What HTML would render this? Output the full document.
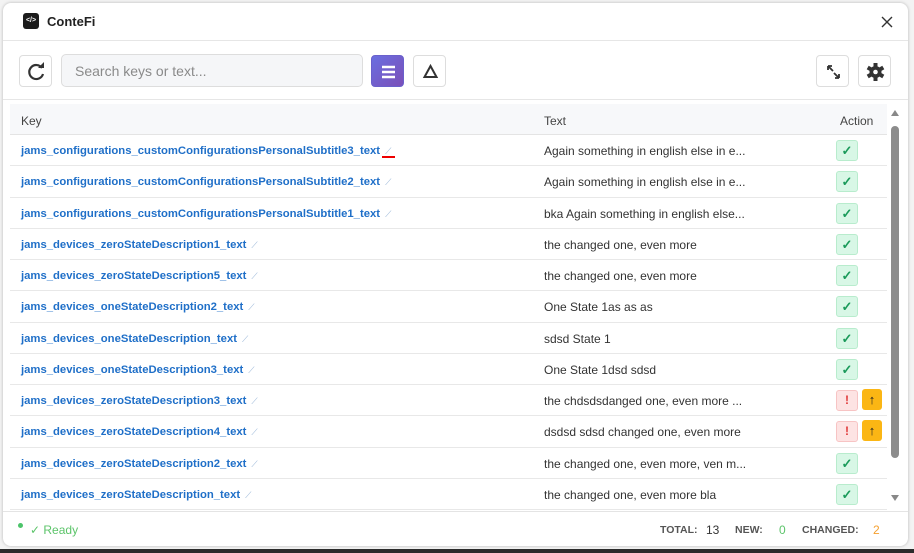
<!DOCTYPE html><html><head><style>
*{box-sizing:border-box;margin:0;padding:0}
body{width:914px;height:553px;background:#f3f3f3;font-family:"Liberation Sans",sans-serif;position:relative;overflow:hidden}
.bottom{position:absolute;left:0;right:0;top:549px;height:4px;background:#2b2b2b}
.win{position:absolute;left:3px;top:3px;width:905px;height:543px;background:#fff;border-radius:8px;box-shadow:0 0 3px rgba(0,0,0,.25);overflow:hidden}
.title{position:absolute;left:0;top:0;width:100%;height:38px;border-bottom:1px solid #e6e6e6}
.logo{position:absolute;left:20px;top:10px;width:16px;height:16px;background:#1c1c1c;border-radius:3px;color:#fff;font-size:7px;text-align:center;line-height:16px;font-weight:bold}
.tt{position:absolute;left:44px;top:11px;font-size:13px;color:#222;font-weight:bold}
.x{position:absolute;right:14px;top:12px}
.btn{position:absolute;top:52px;width:33px;height:32px;border:1px solid #ddd;border-radius:4px;background:#fff}
.search{position:absolute;left:58px;top:51px;width:302px;height:33px;border:1px solid #ddd;border-radius:5px;background:#f5f6f8;color:#8a8a8a;font-size:14px;padding:8px 13px}
.tbl{position:absolute;left:7px;top:101px;width:877px}
.hd{height:31px;background:#f7f8fa;border-bottom:1px solid #e4e4e4;font-size:12px;color:#444;position:relative}
.row{height:31.27px;border-bottom:1px solid #e8e8e8;position:relative;font-size:12px}
.k{position:absolute;left:11px;top:10px;color:#1f6fc8;font-weight:bold;font-size:11.3px;white-space:nowrap}
.k i{color:#9bb8d8;font-style:normal;font-weight:normal;font-size:9px;margin-left:5px}
.t{position:absolute;left:534px;top:9px;color:#333}
.ok{position:absolute;left:826px;top:5px;width:22px;height:21px;background:#d8f7e6;border:1px solid #b8eccd;border-radius:3px;color:#1a9a5a;text-align:center;line-height:19px;font-size:13px;font-weight:bold}
.er{position:absolute;left:826px;top:5px;width:22px;height:21px;background:#fde3e3;border:1px solid #f7c4c4;border-radius:3px;color:#e03b3b;text-align:center;line-height:19px;font-size:12px;font-weight:bold}
.up{position:absolute;left:852px;top:4px;width:20px;height:21px;background:#fbb614;border-radius:3px;color:#222;text-align:center;line-height:21px;font-size:13px;font-weight:bold}
.sb{position:absolute;left:885px;top:105px;width:14px;height:398px}
.foot{position:absolute;left:0;top:508px;width:100%;height:35px;border-top:1px solid #e4e4e4;font-size:12px}
.lb{position:absolute;top:12px;color:#555;font-size:10.5px;font-weight:bold}
</style></head><body>
<div class="win">
<div class="title"><div class="logo">&lt;/&gt;</div><div class="tt">ConteFi</div><svg class="x" width="14" height="14"><path d="M2 2l10 10M12 2L2 12" stroke="#333" stroke-width="1.4"/></svg></div>
<div class="btn" style="left:16px"><svg width="33" height="32" viewBox="0 0 33 32"><path d="M22 12a7 7 0 1 0 1 6" fill="none" stroke="#333" stroke-width="2.2"/><path d="M18 10h6V4z" fill="#333" transform="translate(0,2)"/></svg></div>
<div class="search">Search keys or text...</div>
<div class="btn" style="left:368px;background:linear-gradient(135deg,#6a6fe0,#7b4fb8);border-color:#6a60cc"><svg width="33" height="32"><path d="M10 11h13M10 16h13M10 21h13" stroke="#fff" stroke-width="2.4"/></svg></div>
<div class="btn" style="left:410px"><svg width="33" height="32"><path d="M16.5 10l6 11h-12z" fill="none" stroke="#333" stroke-width="2"/></svg></div>
<div class="btn" style="left:813px"><svg width="33" height="32"><path d="M11 10l5 5M11 10v4M11 10h4M22 22l-5-5M22 22v-4M22 22h-4" stroke="#333" stroke-width="1.8" fill="none"/></svg></div>
<div class="btn" style="left:855px"><svg width="33" height="32" viewBox="0 0 33 32"><g transform="translate(16.5,16)" fill="#333"><circle r="6"/><rect x="-2" y="-9" width="4" height="18"/><rect x="-2" y="-9" width="4" height="18" transform="rotate(60)"/><rect x="-2" y="-9" width="4" height="18" transform="rotate(120)"/><circle r="2.3" fill="#fff"/></g></svg></div>
<div style="position:absolute;left:0;top:96px;width:100%;border-top:1px solid #e6e6e6"></div>
<div class="tbl">
<div class="hd"><span style="position:absolute;left:11px;top:10px">Key</span><span style="position:absolute;left:534px;top:10px">Text</span><span style="position:absolute;left:830px;top:10px">Action</span></div>
<div class="row"><span class="k">jams_configurations_customConfigurationsPersonalSubtitle3_text<i>⟋</i></span><span style="position:absolute;left:372px;top:21px;width:13px;height:2px;background:#e00"></span><span class="t">Again something in english else in e...</span><span class="ok">✓</span></div>
<div class="row"><span class="k">jams_configurations_customConfigurationsPersonalSubtitle2_text<i>⟋</i></span><span class="t">Again something in english else in e...</span><span class="ok">✓</span></div>
<div class="row"><span class="k">jams_configurations_customConfigurationsPersonalSubtitle1_text<i>⟋</i></span><span class="t">bka Again something in english else...</span><span class="ok">✓</span></div>
<div class="row"><span class="k">jams_devices_zeroStateDescription1_text<i>⟋</i></span><span class="t">the changed one, even more</span><span class="ok">✓</span></div>
<div class="row"><span class="k">jams_devices_zeroStateDescription5_text<i>⟋</i></span><span class="t">the changed one, even more</span><span class="ok">✓</span></div>
<div class="row"><span class="k">jams_devices_oneStateDescription2_text<i>⟋</i></span><span class="t">One State 1as as as</span><span class="ok">✓</span></div>
<div class="row"><span class="k">jams_devices_oneStateDescription_text<i>⟋</i></span><span class="t">sdsd State 1</span><span class="ok">✓</span></div>
<div class="row"><span class="k">jams_devices_oneStateDescription3_text<i>⟋</i></span><span class="t">One State 1dsd sdsd</span><span class="ok">✓</span></div>
<div class="row"><span class="k">jams_devices_zeroStateDescription3_text<i>⟋</i></span><span class="t">the chdsdsdanged one, even more ...</span><span class="er">!</span><span class="up">↑</span></div>
<div class="row"><span class="k">jams_devices_zeroStateDescription4_text<i>⟋</i></span><span class="t">dsdsd sdsd changed one, even more</span><span class="er">!</span><span class="up">↑</span></div>
<div class="row"><span class="k">jams_devices_zeroStateDescription2_text<i>⟋</i></span><span class="t">the changed one, even more, ven m...</span><span class="ok">✓</span></div>
<div class="row"><span class="k">jams_devices_zeroStateDescription_text<i>⟋</i></span><span class="t">the changed one, even more bla</span><span class="ok">✓</span></div>
</div>
<div class="sb"><div style="position:absolute;left:3px;top:2px;border:4px solid transparent;border-bottom:6px solid #888;border-top:0"></div><div style="position:absolute;left:3px;top:18px;width:8px;height:332px;background:#8c8c8c;border-radius:4px"></div><div style="position:absolute;left:3px;top:387px;border:4px solid transparent;border-top:6px solid #888;border-bottom:0"></div></div>
<div class="foot"><span style="position:absolute;left:15px;top:11px;width:5px;height:5px;background:#4cc46a;border-radius:50%"></span><span style="position:absolute;left:27px;top:11px;color:#5cc46a">✓ Ready</span>
<span class="lb" style="left:657px">TOTAL:</span><span style="position:absolute;left:703px;top:11px;color:#333">13</span>
<span class="lb" style="left:732px">NEW:</span><span style="position:absolute;left:776px;top:11px;color:#5cc46a">0</span>
<span class="lb" style="left:799px">CHANGED:</span><span style="position:absolute;left:870px;top:11px;color:#f5a030">2</span></div>
</div>
<div class="bottom"></div>
</body></html>
